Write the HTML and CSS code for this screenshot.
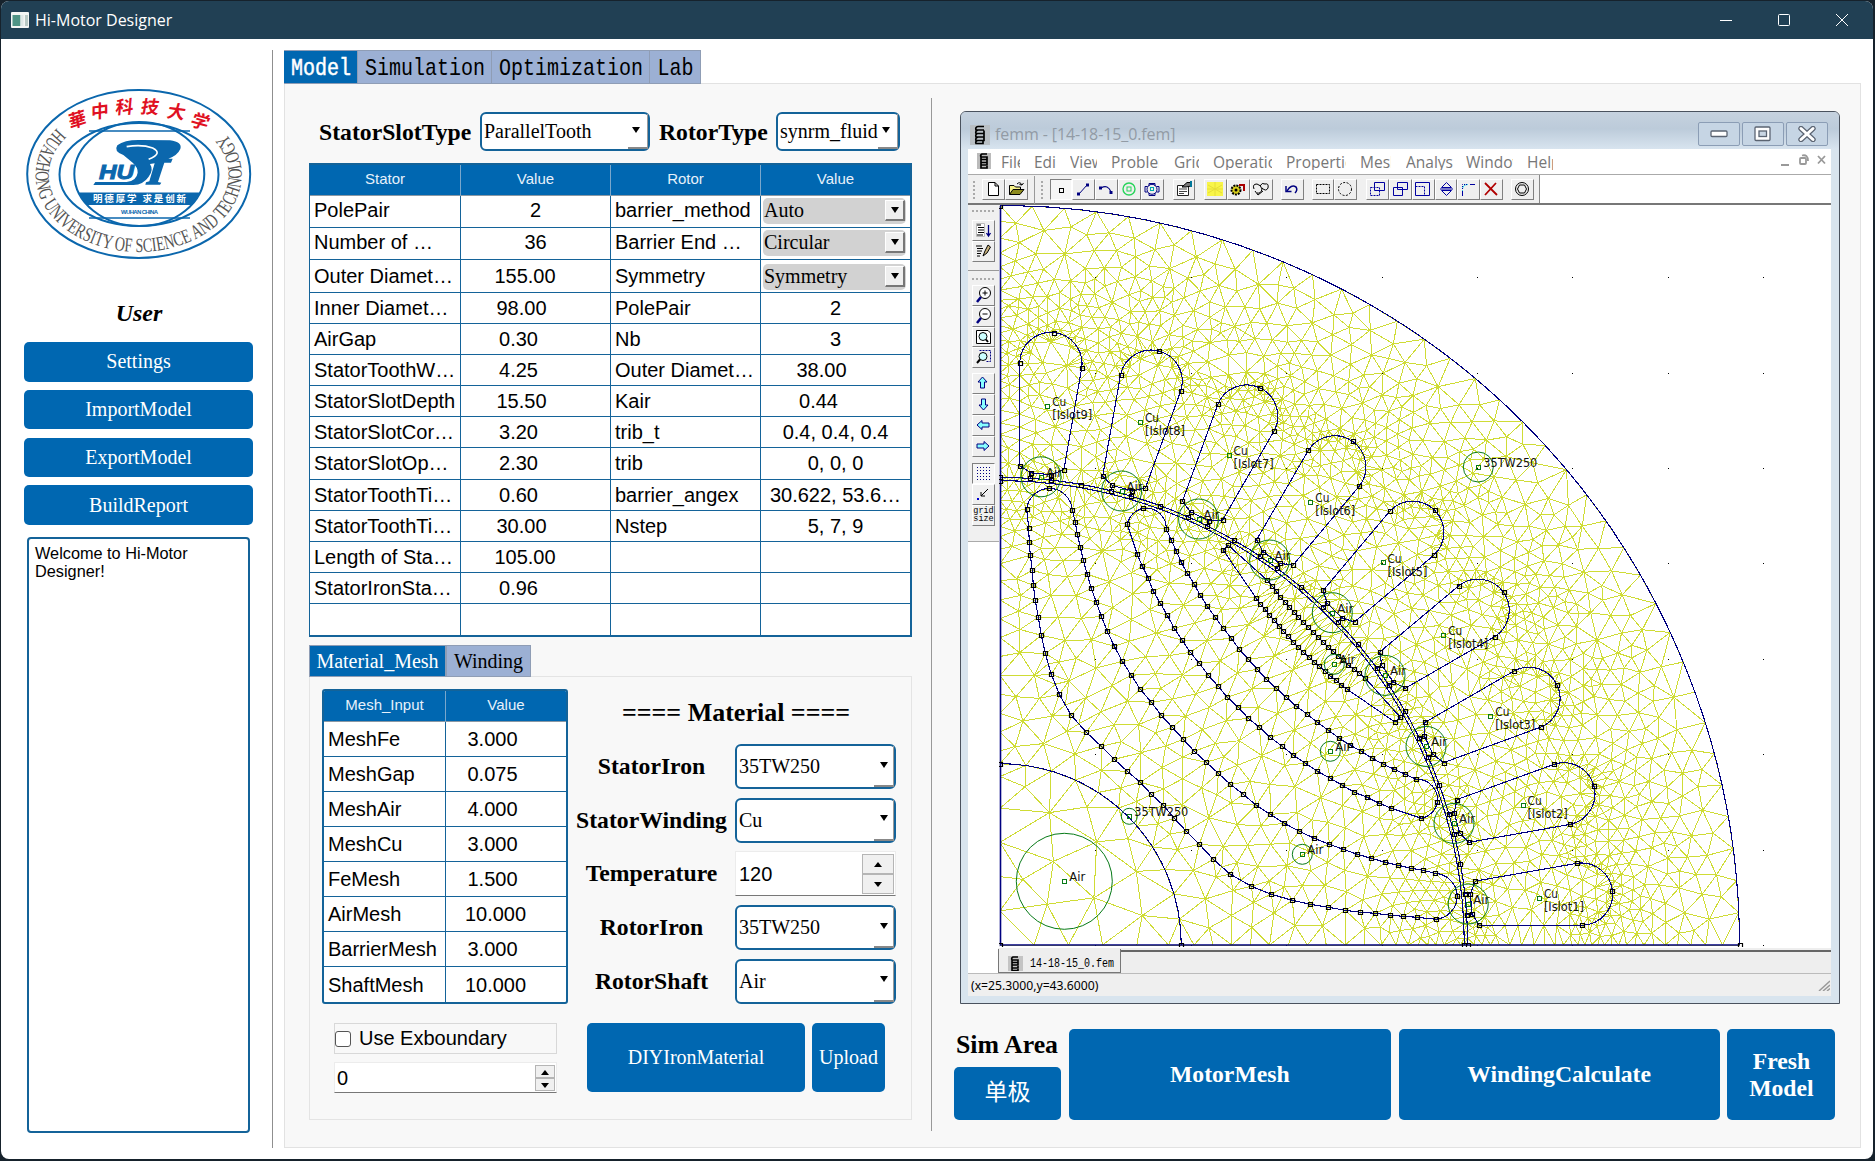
FILE: index.html
```html
<!DOCTYPE html>
<html lang="en">
<head>
<meta charset="utf-8">
<title>Hi-Motor Designer</title>
<link rel="stylesheet" href="styles.css">
</head>
<body>
<div class="window">
  <header class="titlebar">
    <svg class="app-icon" width="18" height="16" viewBox="0 0 18 16"><rect width="18" height="16" rx="1" fill="#f4f6f4"/><rect x="1.500" y="3" width="8" height="11" fill="#4f9485"/><rect x="9.500" y="3" width="3" height="11" fill="#dfe8e6"/><rect x="14" y="3" width="3" height="11" fill="#b9c9c4"/></svg>
    <span class="app-name">Hi-Motor Designer</span>
    <div class="win-controls">
      <svg width="12" height="12"><path d="M0 6.500H12" stroke="#fff"/></svg>
      <svg width="12" height="12"><rect x=".5" y=".5" width="11" height="11" rx="1" fill="none" stroke="#fff"/></svg>
      <svg width="12" height="12"><path d="M0 0L12 12M12 0L0 12" stroke="#fff"/></svg>
    </div>
  </header>
  <div class="body">
    <aside class="sidebar">
      <svg class="logo" width="230" height="176" viewBox="24 86 230 176">
        <g fill="none" stroke="#0b67ad" stroke-width="2">
          <ellipse cx="138.700" cy="174" rx="111.500" ry="84"/>
          <ellipse cx="139" cy="174.500" rx="79.500" ry="51.500"/>
          <ellipse cx="139.300" cy="174" rx="65" ry="52"/>
          <path d="M89 131H190M89 218H190" stroke-width="1.500"/>
        </g>
        <path d="M78 192.500H200.500Q197 200 192 205H87Q82 200 78 192.500Z" fill="#0b67ad"/>
        <g transform="translate(70,110) scale(.3333)">
          <path d="M160 135Q130 125 142 106Q165 88 215 90L300 91Q338 96 331 117Q322 137 295 146L308 146L303 158L283 158L264 216L274 218L270 224L226 224L228 217L238 214L254 160L240 162Q252 180 236 200Q220 224 190 225L70 225L76 216L170 216Q200 212 203 188Q204 172 188 158Q172 145 160 135Z" fill="#0b67ad"/>
          <path d="M170 110Q215 102 248 114Q280 130 236 148" fill="none" stroke="#fff" stroke-width="5"/>
        </g>
        <text x="99" y="178.500" class="hu" textLength="35" lengthAdjust="spacingAndGlyphs">HU</text>
        <text x="93" y="202.200" class="motto" textLength="93">明德厚学 求是创新</text>
        <text x="121" y="213.500" class="wuhan" textLength="37">WUHAN CHINA</text>
        <g class="school">
          <text transform="translate(70,129) rotate(-18) skewX(-8)">華</text>
          <text transform="translate(91,119) rotate(-8) skewX(-8)">中</text>
          <text transform="translate(115,114) rotate(-3) skewX(-8)">科</text>
          <text transform="translate(140,113) rotate(2) skewX(-8)">技</text>
          <text transform="translate(166,117) rotate(7) skewX(-8)">大</text>
          <text transform="translate(189,125) rotate(16) skewX(-8)">学</text>
        </g>
        <path id="ring" d="M57 128A103 77 0 1 0 220.400 128" fill="none"/>
        <text class="ring-text"><textPath href="#ring" textLength="382" lengthAdjust="spacingAndGlyphs">HUAZHONG UNIVERSITY OF SCIENCE AND TECHNOLOGY</textPath></text>
      </svg>
      <h2 class="user">User</h2>
      <button class="btn">Settings</button>
      <button class="btn">ImportModel</button>
      <button class="btn">ExportModel</button>
      <button class="btn">BuildReport</button>
      <div class="log">Welcome to Hi-Motor<br>Designer!</div>
    </aside>
    <main class="main">
      <nav class="tabs">
        <div class="tab on" style="width:74px"><span>Model</span></div>
        <div class="tab" style="width:134px"><span>Simulation</span></div>
        <div class="tab" style="width:158px"><span>Optimization</span></div>
        <div class="tab" style="width:51px"><span>Lab</span></div>
      </nav>
      <div class="panel">
        <section class="left">
          <div class="types">
            <span class="lbl">StatorSlotType</span>
            <div class="combo slot-type"><span>ParallelTooth</span><i></i></div>
            <span class="lbl">RotorType</span>
            <div class="combo rotor-type"><span>synrm_fluid</span><i></i></div>
          </div>
          <div class="table params">
            <b>Stator</b><b>Value</b><b>Rotor</b><b>Value</b>
            <span>PolePair</span><span class="v">2</span><span>barrier_method</span><span class="sel"><em>Auto<i></i></em></span>
            <span>Number of …</span><span class="v">36</span><span>Barrier End …</span><span class="sel"><em>Circular<i></i></em></span>
            <span>Outer Diamet…</span><span class="v t1">155.00</span><span>Symmetry</span><span class="sel"><em>Symmetry<i></i></em></span>
            <span>Inner Diamet…</span><span class="v t2">98.00</span><span>PolePair</span><span class="v">2</span>
            <span>AirGap</span><span class="v t3">0.30</span><span>Nb</span><span class="v">3</span>
            <span>StatorToothW…</span><span class="v t3">4.25</span><span>Outer Diamet…</span><span class="v t2">38.00</span>
            <span>StatorSlotDepth</span><span class="v t2">15.50</span><span>Kair</span><span class="v t3">0.44</span>
            <span>StatorSlotCor…</span><span class="v t3">3.20</span><span>trib_t</span><span class="v">0.4, 0.4, 0.4</span>
            <span>StatorSlotOp…</span><span class="v t3">2.30</span><span>trib</span><span class="v">0, 0, 0</span>
            <span>StatorToothTi…</span><span class="v t3">0.60</span><span>barrier_angex</span><span class="v">30.622, 53.6…</span>
            <span>StatorToothTi…</span><span class="v t2">30.00</span><span>Nstep</span><span class="v">5, 7, 9</span>
            <span>Length of Sta…</span><span class="v t1">105.00</span><span></span><span></span>
            <span>StatorIronSta…</span><span class="v t3">0.96</span><span></span><span></span>
            <span></span><span></span><span></span><span></span>
          </div>
          <nav class="subtabs"><div class="subtab on">Material_Mesh</div><div class="subtab">Winding</div></nav>
          <div class="subpanel">
            <div class="mesh-col">
              <div class="table mesh">
                <b>Mesh_Input</b><b>Value</b>
                <span>MeshFe</span><span class="v m1">3.000</span>
                <span>MeshGap</span><span class="v m1">0.075</span>
                <span>MeshAir</span><span class="v m1">4.000</span>
                <span>MeshCu</span><span class="v m1">3.000</span>
                <span>FeMesh</span><span class="v m1">1.500</span>
                <span>AirMesh</span><span class="v m2">10.000</span>
                <span>BarrierMesh</span><span class="v m1">3.000</span>
                <span>ShaftMesh</span><span class="v m2">10.000</span>
              </div>
              <label class="check"><i></i>Use Exboundary</label>
              <div class="spin small"><span>0</span><div class="arrows"><i class="up"></i><i class="down"></i></div></div>
            </div>
            <div class="mat-col">
              <h3>==== Material ====</h3>
              <div class="form">
                <span class="lbl">StatorIron</span><div class="combo"><span>35TW250</span><i></i></div>
                <span class="lbl">StatorWinding</span><div class="combo"><span>Cu</span><i></i></div>
                <span class="lbl">Temperature</span><div class="spin"><span>120</span><div class="arrows"><i class="up"></i><i class="down"></i></div></div>
                <span class="lbl">RotorIron</span><div class="combo"><span>35TW250</span><i></i></div>
                <span class="lbl">RotorShaft</span><div class="combo"><span>Air</span><i></i></div>
              </div>
              <div class="mat-actions"><button class="btn diy">DIYIronMaterial</button><button class="btn up-btn">Upload</button></div>
            </div>
          </div>
        </section>
        <section class="right">
          <div class="femm">
            <div class="f-title">
              <svg width="20" height="20"><rect width="20" height="20" fill="#b9bfc4"/><path d="M14 1.500H8Q5 2 6 5H14M8 5Q5 6 6 8.500H14V5.500M8 8.500Q5 9 6 12H14V9M8 12Q5 13 6 15.500H14V12.500M8 15.500Q5 16 6 18.500H13V16" fill="none" stroke="#000" stroke-width="1.700"/></svg>
              <span>femm - [14-18-15_0.fem]</span>
              <div class="f-btns">
                <div><svg width="18" height="8"><rect x="1" y="1" width="16" height="5.500" rx="1" fill="#fff" stroke="#5b6472" stroke-width="1.300"/></svg></div>
                <div><svg width="18" height="16"><rect x="1" y="1" width="15" height="13.500" rx="1" fill="#fff" stroke="#5b6472" stroke-width="1.300"/><rect x="5" y="5" width="7.500" height="5.500" fill="#c9d6e3" stroke="#5b6472" stroke-width="1.300"/></svg></div>
                <div><svg width="18" height="16"><path d="M3 2.500L15 13.500M15 2.500L3 13.500" stroke="#5b6472" stroke-width="5.400" stroke-linecap="round"/><path d="M3 2.500L15 13.500M15 2.500L3 13.500" stroke="#fff" stroke-width="3" stroke-linecap="round"/></svg></div>
              </div>
            </div>
            <div class="f-menu">
              <svg width="14" height="16"><rect width="14" height="16" fill="#bbb"/><path d="M10 1H5Q3 2 4 4H10V6.500H4V4M4 6.500V9.500H10V7M4 9.500V12H10V10M4 12V15H10V13" fill="none" stroke="#000" stroke-width="1.700"/></svg>
              <span style="width:19px;margin-left:10px">File</span><span style="width:22px;margin-left:14px">Edit</span><span style="width:27px;margin-left:14px">View</span><span style="width:48px;margin-left:14px">Problem</span><span style="width:25px;margin-left:15px">Grid</span><span style="width:59px;margin-left:14px">Operation</span><span style="width:60px;margin-left:14px">Properties</span><span style="width:31px;margin-left:14px">Mesh</span><span style="width:47px;margin-left:15px">Analysis</span><span style="width:47px;margin-left:13px">Window</span><span style="width:26px;margin-left:14px">Help</span>
              <svg class="mdi" width="46" height="14" fill="none" stroke="#999" stroke-width="1.800"><path d="M1 12H9M38 3L45 10.500M45 3L38 10.500"/><rect x="20" y="5" width="6" height="6" rx="1"/><path d="M22 2.500Q28 1 28 8"/></svg>
            </div>
            <div class="f-tools">
              <div class="strip">
                <i class="grip"></i>
                <div class="tb" style="margin-left:7px"><svg><path d="M5.500 2.500H12L15.500 6V15.500H5.500ZM12 2.500V6H15.500" fill="#fff" stroke="#000"/></svg></div>
                <div class="tb"><svg><path d="M3.500 14.500V5.500H8L9.500 7H14.500V9" fill="#f5f08a" stroke="#000"/><path d="M3.500 14.500L7 9.500H18L14 14.500Z" fill="#8c8a1c" stroke="#000"/><path d="M11 4Q14 1 16 5M16 5L13.500 4.500M16 5L17.500 3" fill="none" stroke="#000"/></svg></div>
                <i class="sep" style="margin:0 6px 0 6px"></i><i class="grip"></i>
                <div class="tb down" style="margin-left:7px"><svg><rect x="8.500" y="8.500" width="4" height="4" fill="none" stroke="#000"/></svg></div>
                <div class="tb"><svg><path d="M6 14L14 5" stroke="#000080"/><path d="M4 12.500H7V15.500H4ZM13 3.500H16V6.500H13Z" fill="#000080"/></svg></div>
                <div class="tb"><svg><path d="M5 8Q12 4 15 12" fill="none" stroke="#000080" stroke-width="1.200"/><path d="M3 6.500H6V9.500H3ZM13.500 11H16.500V14H13.500Z" fill="#000080"/></svg></div>
                <div class="tb"><svg fill="none" stroke="#27d45a"><circle cx="10" cy="9" r="6" stroke-width="1.400"/><rect x="8" y="7" width="4" height="4"/></svg></div>
                <div class="tb"><svg fill="none" stroke="#000080"><path d="M7 6V3.500H13V6M14.500 6.500H17V12H14.500M13 13V15.500H7V13M5.500 12H3V6.500H5.500"/><circle cx="10" cy="9.300" r="5"/><rect x="8.500" y="7.500" width="3" height="3" stroke="#0aa"/></svg></div>
                <div class="tb" style="margin-left:9px"><svg><path d="M3.500 5.500H14.500V15.500H3.500Z" fill="#fff" stroke="#222"/><path d="M5 9H13M5 11.500H13M5 13.500H10" stroke="#444"/><path d="M8 7L13 2.500H17V6L12 7Z" fill="#777" stroke="#000"/><path d="M16 1H18V7H16Z" fill="#079"/></svg></div>
                <div class="tb" style="margin-left:9px"><svg><rect x="2" y="2" width="16" height="14" fill="#f8f548"/><path d="M2 9H18M10 2V16M3 13L17 5M3 5L17 13" stroke="#e6de38"/></svg></div>
                <div class="tb"><svg><circle cx="8" cy="10" r="4.500" fill="#d8cf1c" stroke="#000" stroke-width="2" stroke-dasharray="2 1"/><circle cx="8" cy="10" r="1.500"/><path d="M11 5H16V11" fill="none" stroke="#a00" stroke-width="2"/></svg></div>
                <div class="tb"><svg fill="none" stroke="#000"><path d="M3 9Q1 4 6 4Q10 5 11 9Q10 14 6 13M9 6Q11 2 14 4Q18 3 17 8Q15 12 11 8M4 11L7 15L12 11"/></svg></div>
                <div class="tb" style="margin-left:8px"><svg fill="none" stroke="#000080" stroke-width="1.500"><path d="M5 11Q9 4 14 7Q16 10 13 13"/><path d="M4 6V11.500H9.500" /></svg></div>
                <div class="tb" style="margin-left:8px"><svg><rect x="3.500" y="4.500" width="13" height="9" fill="none" stroke="#000" stroke-dasharray="2 1"/></svg></div>
                <div class="tb"><svg><circle cx="10" cy="9" r="6.500" fill="none" stroke="#000" stroke-dasharray="2 1.500"/></svg></div>
                <div class="tb" style="margin-left:9px"><svg fill="none" stroke="#0000a0"><path d="M7.500 2.500H17.500V10.500H7.500Z"/><path d="M3.500 7.500H12.500V15.500H3.500Z" stroke-dasharray="2 1"/></svg></div>
                <div class="tb"><svg fill="none" stroke="#0000a0"><path d="M7.500 2.500H17.500V9.500H7.500ZM3.500 7.500H12.500V15.500H3.500Z"/></svg></div>
                <div class="tb"><svg fill="none" stroke="#0000a0"><path d="M2.500 2.500H16.500V15.500H2.500Z"/><path d="M2.500 6.500H11.500V15.500" stroke-dasharray="2 1"/></svg></div>
                <div class="tb"><svg fill="none" stroke="#0000a0"><path d="M5.500 7.500L10.500 2.500L15.500 7.500ZM5.500 10.500L10.500 15.500L15.500 10.500ZM4 9H17"/></svg></div>
                <div class="tb"><svg fill="none" stroke="#0000a0"><path d="M4.500 15V10M4.500 9Q5 4.500 10 4.500" stroke="#35d6e8"/><path d="M12 4.500H17M4.500 16V11"/><path d="M4.500 9V4.500H10" stroke-dasharray="1 1"/></svg></div>
                <div class="tb"><svg fill="none" stroke="#b00000" stroke-width="1.800"><path d="M4 3L16 15M15 3L4 15"/></svg></div>
                <div class="tb" style="margin-left:8px"><svg fill="none" stroke="#000"><circle cx="10" cy="9" r="6.500"/><path d="M7.500 5H12.500L14.500 9L12.500 13H7.500L5.500 9Z"/></svg></div>
              </div>
            </div>
            <div class="f-work">
              <div class="vtools">
                <i class="hgrip"></i>
                <div class="tb" style="margin-top:8px"><svg><path d="M3.500 2.500H11.500V15.500H3.500Z" fill="#fff" stroke="#bbb"/><path d="M4 4H8M5 6.500H11M5 9H11M5 11.500H11M4 14H10" stroke="#000"/><path d="M15.500 4V14M13.500 12L15.500 15L17.500 12" fill="none" stroke="#000080" stroke-width="1.300"/></svg></div>
                <div class="tb"><svg><path d="M3 4H9M4 6.500H10M4 9H9M4 11.500H8M4 14H7" stroke="#000"/><path d="M10 14L12 9L15 3L17.500 5L14 11Z" fill="#c9b37c" stroke="#000"/></svg></div>
                <i class="hsep"></i><i class="hgrip"></i>
                <div class="tb" style="margin-top:5px"><svg fill="none" stroke="#000"><circle cx="12" cy="7" r="5.500" fill="#fff"/><path d="M9.500 7H14.500M12 4.500V9.500"/><path d="M8 11L4 16" stroke="#000080" stroke-width="2.500"/></svg></div>
                <div class="tb"><svg fill="none" stroke="#000"><circle cx="12" cy="7" r="5.500" fill="#fff"/><path d="M9.500 7H14.500"/><path d="M8 11L4 16" stroke="#000080" stroke-width="2.500"/></svg></div>
                <div class="tb"><svg fill="none" stroke="#000"><path d="M3.500 2.500H15L17.500 5V15.500H3.500Z" fill="#fff"/><circle cx="10" cy="8.500" r="4" fill="#cff"/><path d="M13 11.500L15 14" stroke-width="2"/></svg></div>
                <div class="tb"><svg fill="none" stroke="#000"><path d="M6.500 2.500H17.500V13.500H13" stroke="#000080" stroke-dasharray="2 1"/><circle cx="10" cy="8.500" r="4" fill="#cff"/><path d="M7 11.500L4 15" stroke-width="2"/></svg></div>
                <div class="tb ar" style="margin-top:5px"><svg><path d="M9.500 3L14 8H11.500V14H7.500V8H5Z"/></svg></div>
                <div class="tb ar"><svg><path d="M10.500 15L6 10H8.500V4H12.500V10H15Z"/></svg></div>
                <div class="tb ar"><svg><path d="M4 9L9 4.500V7H16V11H9V13.500Z"/></svg></div>
                <div class="tb ar"><svg><path d="M16 9L11 4.500V7H4V11H11V13.500Z"/></svg></div>
                <div class="tb down" style="margin-top:6px"><svg><path d="M4 3.500H18M4 6.500H18M4 9.500H18M4 12.500H18M4 15.500H18" stroke="#000080" stroke-dasharray="1 2"/></svg></div>
                <div class="tb"><svg fill="none" stroke="#000"><path d="M15 4L8 11M8 7V11H12"/><rect x="4" y="13" width="2" height="2" fill="#00c" stroke="none"/></svg></div>
                <div class="tb gs">grid<br>size</div>
              </div>
              <svg id="field" class="field" width="829" height="742" viewBox="999 205 829 742"></svg>
            </div>
            <div class="f-tabs"><div class="f-tab"><svg width="15" height="15"><rect width="15" height="15" fill="#c4c4c4"/><path d="M10 1H5Q3 2 4 4H10V6.500H4V4M4 6.500V9H10V7M4 9V12H10V10M4 12V14.500H10V13" fill="none" stroke="#000" stroke-width="1.600"/></svg><span>14-18-15_0.fem</span></div></div>
            <div class="f-status"><span>(x=25.3000,y=43.6000)</span><svg width="12" height="11" stroke="#9a9a9a" stroke-width="1.500"><path d="M1 11L12 1M5 11L12 5M9 11L12 8.500"/></svg></div>
          </div>
          <div class="actions">
            <div class="sim"><span class="lbl">Sim Area</span><button class="btn pole">单极</button></div>
            <button class="btn big" style="width:322px">MotorMesh</button>
            <button class="btn big" style="width:321px">WindingCalculate</button>
            <button class="btn big" style="width:108px">Fresh<br>Model</button>
          </div>
        </section>
      </div>
    </main>
  </div>
</div>
<script src="mesh.js"></script>
</body>
</html>
```
FILE: styles.css
```css
* { box-sizing: border-box; }
body { margin: 0; width: 1875px; height: 1161px; overflow: hidden; background: #16222c; font-family: "Liberation Serif", serif; font-size: 20px; color: #000; }
h2, h3 { margin: 0; }
svg { display: block; flex: none; }
.window { margin: 1px 2px 0 1px; height: 1158px; background: #fff; border-radius: 8px; overflow: hidden; display: flex; flex-direction: column; }
.titlebar { height: 38px; flex: none; background: #214054; color: #fff; display: flex; align-items: center; padding-left: 10px; }
.app-name { font: 16px "Open Sans", sans-serif; margin-left: 6px; white-space: nowrap; }
.win-controls { margin-left: auto; display: flex; gap: 46px; padding-right: 25px; }
.body { flex: 1; display: flex; min-height: 0; }

.sidebar { width: 272px; padding: 36px 0 0 23px; border-right: 1px solid #8f8f8f; margin: 11px 11px 11px 0; flex: none; }
.hu { font: italic 900 21px "Liberation Sans", sans-serif; fill: #0b67ad; stroke: #0b67ad; stroke-width: 1; }
.motto { font: bold 9.500px "Noto Sans CJK SC", sans-serif; fill: #fff; }
.wuhan { font: bold 6px "Liberation Sans", sans-serif; fill: #0b67ad; }
.school { font: bold 18px "Noto Sans CJK SC", sans-serif; fill: #e01022; }
.ring-text { font: 20px "Liberation Serif", serif; fill: #555; }
.user { font: italic bold 24px "Liberation Serif", serif; text-align: center; width: 230px; line-height: 28px; margin: 37px 0 15px; }
.btn { display: block; border: 0; border-radius: 5px; background: #0067b1; color: #fff; font: 20px "Liberation Serif", "Noto Sans CJK SC", serif; padding: 0; text-align: center; }
.sidebar .btn { width: 229px; height: 39.500px; margin-bottom: 8.300px; }
.log { margin: 12px 0 0 3px; width: 223px; height: 596px; border: 2.500px solid #146399; border-radius: 4px; background: #fff; font: 16.300px/18px "Liberation Sans", sans-serif; padding: 5px 6px; }

.main { flex: 1; padding: 11px 12px 11px 0; display: flex; flex-direction: column; min-width: 0; }
.tabs { display: flex; height: 34px; margin-bottom: -1px; z-index: 1; }
.tab { background: #9cb0d4; border: 1px solid #8f9db5; border-width: 1px 1px 1px 0; display: flex; align-items: center; justify-content: center; font: 20px "Liberation Mono", monospace; overflow: hidden; }
.tab span { transform: translate(.5px, 1.500px) scaleY(1.18); }
.tab.on { background: #0067b1; color: #fff; -webkit-text-stroke: .4px #fff; }
.panel { flex: 1; background: #f8f8f8; border: 1px solid #e2e2e2; display: flex; min-height: 0; }
.left { width: 647px; padding: 14px 0 0 24px; border-right: 1px solid #999; margin: 14px 0 16px; flex: none; }
.lbl { font-weight: bold; font-size: 23.700px; white-space: nowrap; }
.types { display: flex; align-items: center; height: 39px; }
.types .lbl { margin-left: 10px; width: 161px; padding-top: 2px; }
.types .slot-type + .lbl { margin-left: 9px; width: 117px; }
.combo { background: #fff; border: 2.500px solid #146399; border-radius: 6px; display: flex; align-items: center; position: relative; padding-left: 2px; white-space: nowrap; }
.combo span { overflow: hidden; flex: 1; margin-right: 20px; }
.combo i { position: absolute; right: 0; bottom: 0; width: 20px; height: 100%; border-right: 1px solid #999; border-bottom: 2px solid #888; }
.combo i::after { content: ""; position: absolute; right: 5px; top: calc(50% - 4px); border: 4.500px solid transparent; border-top: 6px solid #000; border-bottom: 0; }
.slot-type { width: 170px; height: 39px; }
.rotor-type { width: 124px; height: 39px; }
.slot-type i::after, .rotor-type i::after { right: 7px; }
.table { display: grid; background: #fff; border: 2px solid #146399; font-family: "Liberation Sans", sans-serif; white-space: nowrap; overflow: hidden; }
.table > b { background: #0067b1; color: #e6f1fb; font-weight: normal; font-size: 15px; display: flex; align-items: center; justify-content: center; border-right: 1px solid #7aa7cc; border-bottom: 1px solid #8a98a4; padding-bottom: 4px; }
.table > span { border-right: 1.500px solid #146399; border-bottom: 1.500px solid #146399; padding: 1px 0 0 4px; display: flex; align-items: center; overflow: hidden; }
.table > .v { justify-content: center; padding-left: 0; }
.table > .t1 { padding-right: 21px; } .table > .t2 { padding-right: 28px; } .table > .t3 { padding-right: 34px; }
.table > .m1 { padding-right: 27px; } .table > .m2 { padding-right: 21px; }
.params { margin-top: 12px; width: 603px; height: 474px; border-left-width: 1px; grid-template-columns: 151px 150px 150px 1fr; grid-template-rows: 31px 32px 32px 33px repeat(11, 1fr); }
.params > span:nth-of-type(-n+8) { padding-top: 0; padding-bottom: 2px; }
.params > :nth-child(4n) { border-right: 0; }
.mesh > :nth-child(2n) { border-right: 0; }
.params > :nth-last-child(-n+4), .mesh > :nth-last-child(-n+2) { border-bottom: 0; }
.table > .sel { padding: 1px 3px 0 2px; }
.sel em { font: 20px "Liberation Serif", serif; background: #d2d2d2; border-radius: 5px; width: 143px; height: 26px; padding-left: 1px; display: flex; align-items: center; position: relative; }
.sel i { position: absolute; right: 1px; top: 2px; width: 20px; height: 21px; background: #efefef; border: 1px solid #fff; border-right: 2px solid #777; border-bottom: 2px solid #777; }
.sel i::after { content: ""; position: absolute; left: 5px; top: 6px; border: 4.500px solid transparent; border-top: 6px solid #000; border-bottom: 0; }
.subtabs { display: flex; height: 32px; margin: 8px 0 -1px; position: relative; }
.subtab { background: #9cb0d4; border: 1px solid #8f9db5; width: 85px; display: flex; align-items: center; justify-content: center; font-size: 20px; }
.subtab.on { background: #0067b1; color: #fff; width: 137px; }
.subpanel { width: 603px; height: 444px; border: 1px solid #e4e4e4; display: flex; padding: 12px 0 0 12px; }
.mesh-col { width: 246px; flex: none; }
.mesh { width: 246px; height: 315px; border-radius: 3px; grid-template-columns: 122px 1fr; grid-template-rows: 31px repeat(8, 1fr); }
.check { display: flex; align-items: center; margin: 19px 0 0 12px; width: 223px; height: 31px; border: 1px solid #d8d8d8; font: 20px "Liberation Sans", sans-serif; }
.check i { width: 16px; height: 16px; border: 1px solid #555; border-radius: 3px; background: #fff; margin-right: 8px; }
.spin { background: #fff; border: 1px solid #ececec; border-bottom-color: #777; font: 20px "Liberation Sans", sans-serif; display: flex; align-items: center; justify-content: space-between; padding: 1px 1px 0 3px; }
.spin.small { margin: 8px 0 0 12px; width: 223px; height: 31px; padding-left: 2px; }
.arrows i { display: block; position: relative; width: 32px; height: 20px; background: #f0f0f0; border: 1px solid #b5b5b5; }
.small .arrows i { width: 20px; height: 13px; }
.arrows i::after { content: ""; position: absolute; left: calc(50% - 4px); top: calc(50% - 2px); border: 4px solid transparent; }
.arrows .up::after { border-bottom: 5px solid #000; border-top: 0; }
.arrows .down::after { border-top: 5px solid #000; border-bottom: 0; }
.mat-col { width: 320px; margin-left: 8px; }
.mat-col h3 { font-size: 26px; text-align: center; width: 320px; line-height: 28px; margin-top: 10px; white-space: nowrap; }
.form { display: grid; grid-template-columns: 151px 161px; column-gap: 8px; grid-auto-rows: 45px; row-gap: 8.700px; margin-top: 17px; }
.form .lbl { text-align: center; align-self: center; }
.mat-actions { display: flex; gap: 7px; margin: 19.500px 0 0 11px; }
.diy { width: 218px; height: 69px; } .up-btn { width: 73px; height: 69px; }

.right { padding: 27px 0 0 28px; flex: 1; min-width: 0; }
.femm { width: 880px; height: 893px; border: 1.500px solid #4a525e; border-radius: 6px 6px 0 0; background: #d8e4ee; padding: 0 8px 7px 7px; display: flex; flex-direction: column; }
.f-title { height: 37px; margin: 0 -8px 0 -7px; padding: 8px 11px 0 9px; background: linear-gradient(#c6d2df, #bccbda 45%, #d8e4ef); display: flex; align-items: center; flex: none; border-radius: 5px 5px 0 0; font: 16px "Open Sans", sans-serif; color: #929ba5; }
.f-title span { margin: -2px 0 0 5px; white-space: nowrap; letter-spacing: -.1px; }
.f-btns { margin-left: auto; display: flex; gap: 2px; margin-top: -2px; }
.f-btns div { width: 42px; height: 24px; border: 1px solid #8b9db5; border-radius: 2px; display: flex; align-items: center; justify-content: center; background: #c6d5e4; }
.f-menu { height: 26px; background: #fff; border-bottom: 1px solid #aaa; display: flex; padding: 4px 5px 0 9px; flex: none; font: 15.500px/22px "Open Sans", sans-serif; color: #777; }
.f-menu span { overflow: hidden; height: 17px; line-height: 19px; flex: none; }
.mdi { margin-left: auto; }
.f-tools { height: 30px; background: #fff; border-bottom: 2px solid #777; display: flex; flex: none; }
.strip { width: 572px; background: #f0f0f0; border-right: 1px solid #888; display: flex; align-items: center; padding: 1px 0 0 5px; }
.tb { width: 22.800px; height: 21px; border: 1px solid #fff; border-right: 1.500px solid #808080; border-bottom: 1.500px solid #808080; background: #efefef; flex: none; }
.tb.down { border-color: #808080 #fff #fff #808080; background: #f6f6f6; }
.tb svg { width: 20px; height: 18px; }
.grip { width: 2px; height: 18px; background: repeating-linear-gradient(#aaa 0 2px, transparent 2px 4px); flex: none; }
.sep { width: 1px; height: 28px; background: #999; flex: none; }
.f-work { display: flex; height: 743px; flex: none; background: #fff; }
.vtools { width: 31px; height: 337px; background: #f0f0f0; border-bottom: 1px solid #aaa; padding: 5px 0 0 4px; flex: none; }
.vtools .tb { width: 23px; height: 20.900px; }
.hgrip { display: block; width: 22px; height: 2px; background: repeating-linear-gradient(90deg, #aaa 0 2px, transparent 2px 4px); }
.hsep { display: block; height: 1px; background: #999; margin: 8px 0 7px -4px; }
.ar path { fill: #8ff; stroke: #000080; }
.gs { font: 8.500px/8px "Liberation Mono", monospace; text-align: center; padding-top: 1px; }
.field { background: #fff; }
.f-tabs { height: 26px; padding-left: 30px; flex: none; border-bottom: 1px solid #bbb; background-image: linear-gradient(90deg, transparent 153px, #666 153px), linear-gradient(90deg, #fff 30px, #eee 30px); background-size: 100% 2px, 100% 100%; background-repeat: no-repeat; background-position: 0 2px, 0 0; }
.f-tab { width: 123px; height: 24px; border: 1.500px solid #777; border-top: 0; display: flex; align-items: center; padding: 5px 0 0 9px; margin-top: 1px; }
.f-tab span { font: 10px "Liberation Mono", monospace; margin-left: 7px; transform: scaleY(1.2); white-space: nowrap; }
.f-status { flex: 1; background: #efefef; display: flex; align-items: center; justify-content: space-between; padding: 1px 1px 0 3px; font: 12.200px "Noto Sans", sans-serif; }
.actions { display: flex; margin: 25px 0 0 -6px; height: 91px; gap: 7.800px; }
.sim { width: 107px; display: flex; flex-direction: column; justify-content: space-between; }
.sim .lbl { padding: 1px 0 0 2px; font-size: 25.800px; }
.pole { width: 107px; height: 53px; font-size: 23px; padding-bottom: 7px; }
.big { font-weight: bold; font-size: 23.700px; line-height: 27px; flex: none; }

#field .mesh-lines { fill: none; stroke: #cfdc35; stroke-width: 1; }
#field .edge { fill: none; stroke: #000080; stroke-width: 1.100; }
#field .node { fill: none; stroke: #000; stroke-width: 1.200; }
#field .mark { fill: none; stroke: #077a17; stroke-width: 1; }
#field text { font: 12px "DejaVu Sans", sans-serif; fill: #111; }
```
FILE: mesh.js
```javascript
// Quarter model of the motor: geometry, block labels and triangulated mesh.
const CX = 1000, CY = 945, R_OUT = 739.5, R_BORE = 467.6, R_ROTOR = 464.3, R_SHAFT = 181.3;
let seed = 12345;
const rnd = () => (seed = (seed * 1103515245 + 12345) & 0x7fffffff) / 0x7fffffff;
const toPx = s => s.split(' ').map(p => { const [a, b] = p.split(',').map(Number); return [960 + a / 3, 300 + b / 3]; });

const barriers = [
  { a: '200,628 206,685 208,727 211,766 217,811 220,856 226,901 235,952 244,1006 256,1060 274,1123 298,1183 334,1246 379,1297 424,1339 463,1378 502,1414 541,1447 574,1483 610,1516 643,1555 679,1594 718,1633 760,1678 811,1723 874,1759 934,1783 997,1801 1051,1813 1105,1822 1156,1831 1201,1837 1246,1840 1291,1846 1330,1849 1372,1852 1429,1858',
    b: '337,631 346,667 352,703 361,742 370,781 382,823 394,865 409,907 424,949 442,994 463,1039 487,1084 514,1126 541,1168 574,1207 604,1246 637,1282 670,1318 703,1354 739,1387 775,1420 811,1453 850,1483 889,1516 931,1543 973,1570 1018,1594 1063,1615 1108,1633 1150,1648 1192,1663 1234,1675 1276,1687 1315,1696 1354,1705 1390,1711 1426,1720',
    t: '268,565 1492,1788' },
  { a: '502,673 532,763 547,799 565,835 580,874 601,910 622,946 643,985 667,1021 691,1057 718,1090 745,1126 775,1159 802,1192 835,1222 865,1255 898,1282 931,1312 967,1339 1000,1366 1036,1390 1072,1414 1111,1435 1147,1456 1183,1477 1222,1492 1258,1510 1294,1525 1384,1555',
    b: '619,688 634,721 649,754 664,787 682,820 703,853 721,886 742,919 766,952 790,985 814,1015 838,1048 865,1078 892,1108 919,1138 949,1165 979,1192 1009,1219 1042,1243 1072,1267 1105,1291 1138,1315 1171,1336 1204,1354 1237,1375 1270,1393 1303,1408 1336,1423 1369,1438',
    t: '550,625 1432,1507' },
  { a: '790,751 889,895 901,913 916,928 928,946 943,961 958,979 970,994 985,1009 1000,1027 1015,1042 1030,1057 1048,1072 1063,1087 1078,1099 1096,1114 1111,1129 1129,1141 1144,1156 1162,1168 1306,1267',
    b: '805,736 922,841 937,859 949,874 961,892 976,907 988,922 1003,937 1015,952 1030,967 1045,982 1060,997 1075,1012 1090,1027 1105,1042 1120,1054 1135,1069 1150,1081 1165,1096 1183,1108 1198,1120 1216,1135 1321,1252',
    t: '' }
];

let edge = '', fixed = [];
const nodes = [], feats = [];
const add = (x, y, h, g) => feats.push([x, y, h, g]);
const f1 = n => n.toFixed(1);

function lineFeat(p, q, h) {
  const n = Math.max(1, Math.round(Math.hypot(q[0] - p[0], q[1] - p[1]) / h));
  for (let i = 0; i <= n; i++) {
    const x = p[0] + (q[0] - p[0]) * i / n, y = p[1] + (q[1] - p[1]) * i / n;
    add(x, y, h, .22); fixed.push([x, y]);
  }
}
function arcFeat(r, h) {
  const n = Math.round(r * Math.PI / 2 / h);
  for (let i = 0; i <= n; i++) {
    const t = i / n * Math.PI / 2;
    const x = CX + r * Math.cos(t), y = CY - r * Math.sin(t);
    add(x, y, h, .2); fixed.push([x, y]);
  }
}
const arc = r => `M${CX + r} ${CY}A${r} ${r} 0 0 0 ${CX} ${CY - r}`;
edge += arc(R_OUT) + arc(R_BORE) + arc(R_ROTOR) + arc(R_SHAFT);
arcFeat(R_OUT, 32); arcFeat(R_BORE, 7); arcFeat(R_ROTOR, 7); arcFeat(R_SHAFT, 26);

const labels = [];
for (let k = 0; k < 9; k++) {
  const t = (5 + 10 * k) * Math.PI / 180, c = Math.cos(t), s = Math.sin(t);
  const L = (u, v) => [CX + u * c - v * s, CY - u * s - v * c];
  const pts = [L(467.5, 10.3), L(473, 10.3), L(479.2, 22.2), L(582, 31.1), L(614.8, 0), L(582, -31.1), L(479.2, -22.2), L(473, -10.3), L(467.5, -10.3)];
  const m = pts.map(p => f1(p[0]) + ' ' + f1(p[1]));
  edge += `M${m[0]}L${m[1]}L${m[2]}L${m[3]}A31.2 31.2 0 0 1 ${m[4]}A31.2 31.2 0 0 1 ${m[5]}L${m[6]}L${m[7]}L${m[8]}M${m[1]}L${m[7]}`;
  nodes.push(...pts);
  const b = (10 * k + 10) * Math.PI / 180;
  if (k < 8) nodes.push([CX + R_BORE * Math.cos(b), CY - R_BORE * Math.sin(b)]);
  lineFeat(pts[2], pts[3], 13); lineFeat(pts[5], pts[6], 13); lineFeat(pts[1], pts[2], 5); lineFeat(pts[6], pts[7], 5);
  for (let i = 1; i < 24; i++) {
    const a = (-90 + i * 7.5) * Math.PI / 180, p = L(583.6 + 31.1 * Math.cos(a), 31.1 * Math.sin(a));
    add(p[0], p[1], 4.2, .14); fixed.push(p);
  }
  add(pts[4][0], pts[4][1], 1.8, .2);
  const o = L(470, 0), q = L(541, 0);
  labels.push([o[0], o[1], 20, 'Air'], [q[0], q[1], 0, 'Cu', `[Islot${k + 1}]`]);
}
for (const br of barriers) {
  const a = toPx(br.a), b = toPx(br.b), t = br.t ? toPx(br.t) : [];
  const P = p => f1(p[0]) + ' ' + f1(p[1]);
  edge += 'M' + a.map(P).join('L') + 'M' + b.map(P).join('L');
  const ends = [[a[0], t[0], b[0]], [b[b.length - 1], t[1], a[a.length - 1]]];
  for (const [p, m, q] of ends) {
    if (m) {
      // quarter arcs through the tip node
      const d = Math.hypot(p[0] - q[0], p[1] - q[1]) / 2 + .6;
      edge += `M${P(p)}A${f1(d)} ${f1(d)} 0 0 1 ${P(m)}A${f1(d)} ${f1(d)} 0 0 1 ${P(q)}`;
      add(m[0], m[1], 3.5, .22); fixed.push(m);
    } else edge += `M${P(p)}L${P(q)}`;
    add(p[0], p[1], m ? 4 : 2, .2); add(q[0], q[1], m ? 4 : 2, .2);
  }
  nodes.push(...a, ...b, ...t);
  for (const s of [a, b]) for (let i = 1; i < s.length; i++) lineFeat(s[i - 1], s[i], 14);
}
nodes.push([CX, CY], [CX + R_SHAFT, CY], [CX, CY - R_SHAFT], [CX + 464, CY], [CX + 468, CY], [CX, CY - 464], [CX, CY - 468], [CX + R_OUT, CY], [CX, CY - R_OUT]);
labels.push([1334.3, 664.3, 10, 'Air'], [1330.3, 751.3, 10, 'Air'], [1302.3, 854.3, 10, 'Air'], [1129.3, 816.3, 8, '35TW250'], [1064.3, 881.3, 48, 'Air'], [1478.3, 467, 15, '35TW250']);

// Target element size sampled on a coarse lattice
const G = 5, N = 150, size = new Float32Array(N * N);
for (let j = 0; j < N; j++) for (let i = 0; i < N; i++) {
  const x = CX + i * G, y = CY - j * G, r = Math.hypot(i * G, j * G);
  let h = r > R_BORE ? 36 : r < R_SHAFT ? 38 : 21;
  for (const f of feats) {
    const v = f[2] + f[3] * Math.hypot(x - f[0], y - f[1]);
    if (v < h) h = v;
  }
  size[j * N + i] = h;
}
const hAt = (x, y) => size[Math.min(N - 1, Math.max(0, Math.round((CY - y) / G))) * N + Math.min(N - 1, Math.max(0, Math.round((x - CX) / G)))];

for (let d = 0; d < R_OUT; d += hAt(CX + d, CY) * .9) fixed.push([CX + d, CY]);
for (let d = 0; d < R_OUT; d += hAt(CX, CY - d) * .9) fixed.push([CX, CY - d]);

// Graded dart throwing, accepted points bucketed for the distance test
const B = 16, buckets = new Map(), pts = [];
function tryAdd(x, y, h) {
  const bi = Math.floor(x / B), bj = Math.floor(y / B), w = Math.ceil(h / B);
  for (let i = bi - w; i <= bi + w; i++) for (let j = bj - w; j <= bj + w; j++) {
    const c = buckets.get(i * 4096 + j);
    if (c) for (const p of c) if ((p[0] - x) ** 2 + (p[1] - y) ** 2 < h * h) return;
  }
  const p = [x + (rnd() - .5) * .01, y + (rnd() - .5) * .01], k = bi * 4096 + bj;
  if (!buckets.has(k)) buckets.set(k, []);
  buckets.get(k).push(p); pts.push(p);
}
for (const p of fixed) tryAdd(p[0], p[1], 2);
const pinned = pts.length;
for (let n = 0; n < 150000; n++) {
  const x = rnd() * R_OUT, y = rnd() * R_OUT, h = hAt(CX + x, CY - y) * .8;
  if (x * x + y * y > (R_OUT - h * .6) ** 2 || x < h * .5 || y < h * .5) continue;
  tryAdd(CX + x, CY - y, h);
}

// Delaunay triangulation, sweeping in x
function circum(i, j, k, P) {
  const [ax, ay] = P[i], [bx, by] = P[j], [cx, cy] = P[k];
  const d = 2 * ((bx - ax) * (cy - ay) - (by - ay) * (cx - ax));
  const b2 = (bx - ax) ** 2 + (by - ay) ** 2, c2 = (cx - ax) ** 2 + (cy - ay) ** 2;
  const ux = ((cy - ay) * b2 - (by - ay) * c2) / d, uy = ((bx - ax) * c2 - (cx - ax) * b2) / d;
  return { i, j, k, x: ax + ux, y: ay + uy, r: ux * ux + uy * uy };
}
function triangulate() {
  const n = pts.length, P = pts.concat([[-19000, -9000], [1400, 31000], [21000, -9000]]);
  const order = pts.map((_, i) => i).sort((a, b) => P[a][0] - P[b][0]);
  let open = [circum(n, n + 1, n + 2, P)];
  const done = [];
  for (const c of order) {
    const es = new Map(), keep = [];
    for (const t of open) {
      const dx = P[c][0] - t.x, dy = P[c][1] - t.y;
      if (dx > 0 && dx * dx > t.r) { done.push(t); continue; }
      if (dx * dx + dy * dy > t.r) { keep.push(t); continue; }
      for (const [a, b] of [[t.i, t.j], [t.j, t.k], [t.k, t.i]]) {
        const key = Math.min(a, b) * 100000 + Math.max(a, b);
        es.has(key) ? es.set(key, null) : es.set(key, [a, b]);
      }
    }
    for (const e of es.values()) if (e) keep.push(circum(e[0], e[1], c, P));
    open = keep;
  }
  const seen = new Set(), pairs = [];
  for (const t of done.concat(open)) {
    if (t.i >= n || t.j >= n || t.k >= n) continue;
    for (const [a, b] of [[t.i, t.j], [t.j, t.k], [t.k, t.i]]) {
      const key = Math.min(a, b) * 100000 + Math.max(a, b);
      if (!seen.has(key)) { seen.add(key); pairs.push([a, b]); }
    }
  }
  return pairs;
}
let pairs = triangulate();
// Laplacian smoothing of the free points
for (let pass = 0; pass < 2; pass++) {
  const sum = pts.map(() => [0, 0, 0]);
  for (const [a, b] of pairs) {
    sum[a][0] += pts[b][0]; sum[a][1] += pts[b][1]; sum[a][2]++;
    sum[b][0] += pts[a][0]; sum[b][1] += pts[a][1]; sum[b][2]++;
  }
  for (let i = pinned; i < pts.length; i++) if (sum[i][2]) pts[i] = [sum[i][0] / sum[i][2], sum[i][1] / sum[i][2]];
  pairs = triangulate();
}
const lines = pairs.map(([a, b]) => `M${f1(pts[a][0])} ${f1(pts[a][1])}L${f1(pts[b][0])} ${f1(pts[b][1])}`).join('');

let out = `<path class="mesh-lines" shape-rendering="crispEdges" d="${lines}"/>`;
let dots = '';
for (let i = 1; i < 9; i++) for (let j = 0; j < 8; j++) dots += `M${Math.round(CX + i * 95.4)} ${Math.round(CY - j * 95.4) + .5}h1`;
out += `<path d="${dots}" stroke="#000" shape-rendering="crispEdges"/>`;
out += `<path class="edge" shape-rendering="crispEdges" d="${edge}"/><path d="M1000.5 206V945H1739.500" fill="none" stroke="#000080" stroke-width="1.600"/>`;
out += `<path class="node" d="${nodes.map(p => `M${Math.round(p[0]) - 1.5} ${Math.round(p[1]) - 1.5}h4v4h-4z`).join('')}"/>`;
for (const [x, y, r, a, b] of labels) {
  out += `<rect class="mark" x="${Math.round(x) - 1.5}" y="${Math.round(y) - 1.5}" width="4" height="4"/>`;
  if (r) out += `<circle class="mark" cx="${f1(x)}" cy="${f1(y)}" r="${r}"/>`;
  const w = { Air: 16, Cu: 14, '35TW250': 54 }[a];
  out += `<text x="${f1(x + 5)}" y="${f1(y)}" textLength="${w}" lengthAdjust="spacingAndGlyphs">${a}</text>`;
  if (b) out += `<text x="${f1(x + 5)}" y="${f1(y + 13)}" textLength="40" lengthAdjust="spacingAndGlyphs">${b}</text>`;
}
document.getElementById('field').innerHTML = out;
```
